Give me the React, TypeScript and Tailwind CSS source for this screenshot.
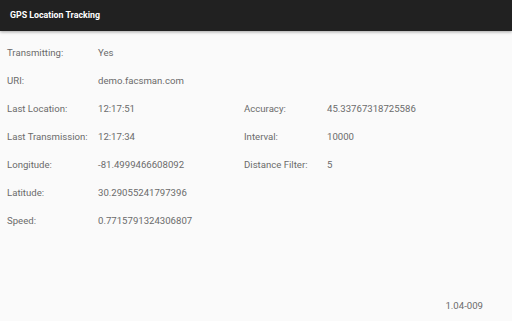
import React from 'react';

const rows: [string, string, string?, string?][] = [
    ['Transmitting:', 'Yes'],
    ['URI:', 'demo.facsman.com'],
    ['Last Location:', '12:17:51', 'Accuracy:', '45.33767318725586'],
    ['Last Transmission:', '12:17:34', 'Interval:', '10000'],
    ['Longitude:', '-81.4999466608092', 'Distance Filter:', '5'],
    ['Latitude:', '30.29055241797396'],
    ['Speed:', '0.7715791324306807'],
];

const App = () => {
    return (
        <div className="h-screen flex flex-col bg-[#fafafa] text-[#6b6b6b] text-[9.6px]" style={{ fontFamily: 'Roboto, sans-serif' }}>
            {/* Toolbar */}
            <div className="h-[31px] shrink-0 bg-[#212121] flex items-center px-[10px] shadow-[0_1px_3px_rgba(0,0,0,0.35)] z-10">
                <span className="text-white font-bold text-[8.8px]">GPS Location Tracking</span>
            </div>

            {/* Status grid */}
            <div className="pt-[8px] px-[7px] grid grid-cols-[91px_146px_83px_1fr] auto-rows-[28px] items-center">
                {rows.map((r, i) => (
                    <React.Fragment key={i}>
                        <div>{r[0]}</div>
                        <div>{r[1]}</div>
                        <div>{r[2] ?? ''}</div>
                        <div>{r[3] ?? ''}</div>
                    </React.Fragment>
                ))}
            </div>

            <div className="mt-auto flex justify-end pr-[29px] pb-[8px]">
                <span>1.04-009</span>
            </div>
        </div>
    );
};

export default App;
